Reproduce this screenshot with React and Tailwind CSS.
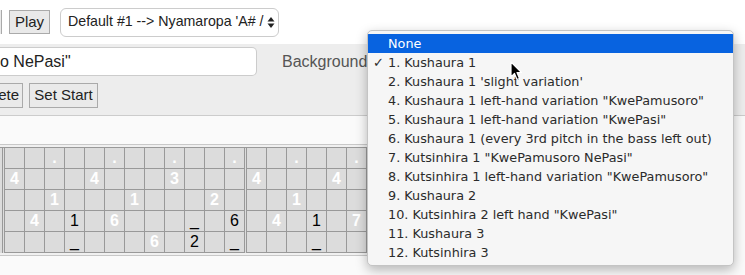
import React from "react";

const F = { fontFamily: '"Liberation Sans", Arial, sans-serif' };
const M = { fontFamily: '"DejaVu Sans", "Liberation Sans", sans-serif' };

function mk(spec) {
  const rows = [];
  for (let r = 0; r < 5; r++) {
    const row = Array(12).fill(null);
    (spec[r] || []).forEach(([i, t, c]) => (row[i] = { t, c }));
    rows.push(row);
  }
  return rows;
}

const sec1 = mk([
  [[2, ".", "w"], [5, ".", "w"], [8, ".", "w"], [11, ".", "w"]],
  [[0, "4", "w"], [4, "4", "w"], [8, "3", "w"]],
  [[2, "1", "w"], [6, "1", "w"], [10, "2", "w"]],
  [[1, "4", "w"], [3, "1", "b"], [5, "6", "w"], [9, "_", "b"], [11, "6", "b"]],
  [[3, "_", "b"], [7, "6", "w"], [9, "2", "b"], [11, "_", "b"]],
]);
const sec2 = mk([
  [[2, ".", "w"], [5, ".", "w"], [8, ".", "w"], [11, ".", "w"]],
  [[0, "4", "w"], [4, "4", "w"], [8, "3", "w"]],
  [[2, "1", "w"], [6, "1", "w"], [10, "2", "w"]],
  [[1, "4", "w"], [3, "1", "b"], [5, "7", "w"], [9, "_", "b"]],
  [[3, "_", "b"], [7, "6", "w"], [9, "2", "b"]],
]);

function Section({ data }) {
  return (
    <div className="flex flex-col border-l-[3px] border-double border-[#999] shrink-0">
      {data.map((row, r) => (
        <div key={r} className="flex h-[21px] border-b border-[#999]">
          {row.map((cell, i) => (
            <div
              key={i}
              className={
                "h-[20px] flex items-center justify-center text-[16px] leading-[20px] " +
                (i < 11 ? "w-[20px] border-r border-[#999]" : "w-[19px]") +
                (cell && cell.c === "w" ? " text-white font-bold" : " text-black")
              }
            >
              {cell ? cell.t : ""}
            </div>
          ))}
        </div>
      ))}
    </div>
  );
}

const items = [
  "1. Kushaura 1",
  "2. Kushaura 1 'slight variation'",
  '4. Kushaura 1 left-hand variation "KwePamusoro"',
  '5. Kushaura 1 left-hand variation "KwePasi"',
  "6. Kushaura 1 (every 3rd pitch in the bass left out)",
  '7. Kutsinhira 1 "KwePamusoro NePasi"',
  '8. Kutsinhira 1 left-hand variation "KwePamusoro"',
  "9. Kushaura 2",
  '10. Kutsinhira 2 left hand "KwePasi"',
  "11. Kushaura 3",
  "12. Kutsinhira 3",
];

export default function App() {
  return (
    <div className="relative w-[745px] h-[275px] overflow-hidden bg-[#fafafa] text-[#222]" style={F}>
      {/* top row */}
      <div className="h-[44px] bg-white flex items-center">
        <div className="w-[2px] h-[24px] bg-[#e9e9e9] border-r border-[#aaa]" />
        <div className="ml-[7px] w-[41px] h-[24px] bg-[#e9e9e9] border border-[#aaa] flex items-center justify-center text-[15px]">
          Play
        </div>
        <div className="ml-[10px] w-[219px] h-[29px] border border-[#ccc] rounded-[6px] bg-white flex items-center pl-[7px] pr-[3px] text-[14.2px] overflow-hidden">
          <span className="whitespace-nowrap overflow-hidden flex-1">Default #1 --&gt; Nyamaropa 'A# / C</span>
          <svg width="8" height="13" viewBox="0 0 8 13" className="ml-[2px] shrink-0">
            <path d="M4 1 L7.5 5.5 L0.5 5.5 Z" fill="#222" />
            <path d="M4 12 L7.5 7.5 L0.5 7.5 Z" fill="#222" />
          </svg>
        </div>
      </div>

      {/* gray band */}
      <div className="h-[72px] bg-[#ededed] border-b border-[#ccc] pt-[3px]">
        <div className="flex items-center h-[29px]">
          <div className="w-[257px] h-[29px] bg-white border border-l-0 border-[#ccc] rounded-r-[5px] flex items-center text-[16px] whitespace-nowrap">
            o NePasi"
          </div>
          <div className="ml-[25px] text-[16px] text-[#555] whitespace-nowrap">Background: None</div>
        </div>
        <div className="flex items-center mt-[7px] h-[25px]">
          <div className="w-[23px] h-[25px] bg-[#eaeaea] border border-l-0 border-[#aaa] flex items-center justify-end pr-[3px] text-[15px]">
            ete
          </div>
          <div className="ml-[6px] w-[69px] h-[25px] bg-[#eaeaea] border border-[#aaa] flex items-center justify-center text-[15px]">
            Set Start
          </div>
        </div>
      </div>

      {/* spacer */}
      <div className="h-[28px] bg-[#fafafa]" />

      {/* grid */}
      <div className="border-y border-[#c8c8c8] bg-[#f0f0f0] py-[2px] w-max">
        <div className="flex bg-[#dcdcdc] border-t border-[#999]">
          <div className="w-[2px] shrink-0" />
          <Section data={sec1} />
          <Section data={sec2} />
          <Section data={sec1} />
        </div>
      </div>

      {/* dropdown menu */}
      <div
        className="absolute left-[367px] top-[30px] w-[367px] h-[236px] bg-[#f6f6f6] rounded-[5px] border border-[#c4c4c4] shadow-[0_4px_12px_rgba(0,0,0,0.28)] pt-[3px] text-[12.8px] text-[#2b2b2b] overflow-hidden"
        style={M}
      >
        <div className="h-[19px] bg-[#0863e0] text-white flex items-center pl-[20px]">None</div>
        {items.map((t, i) => (
          <div key={i} className="h-[19px] flex items-center pl-[20px] relative whitespace-nowrap">
            {i === 0 && <span className="absolute left-[5px] text-[13px]">✓</span>}
            {t}
          </div>
        ))}
      </div>

      {/* mouse cursor */}
      <svg className="absolute left-[510px] top-[61px]" width="13" height="20" viewBox="0 0 13 20">
        <path d="M1 1 L1 16 L4.5 12.5 L7 18.5 L9.5 17.5 L7 11.5 L11.5 11.5 Z" fill="#000" stroke="#fff" strokeWidth="1.2" strokeLinejoin="round" />
      </svg>
    </div>
  );
}
